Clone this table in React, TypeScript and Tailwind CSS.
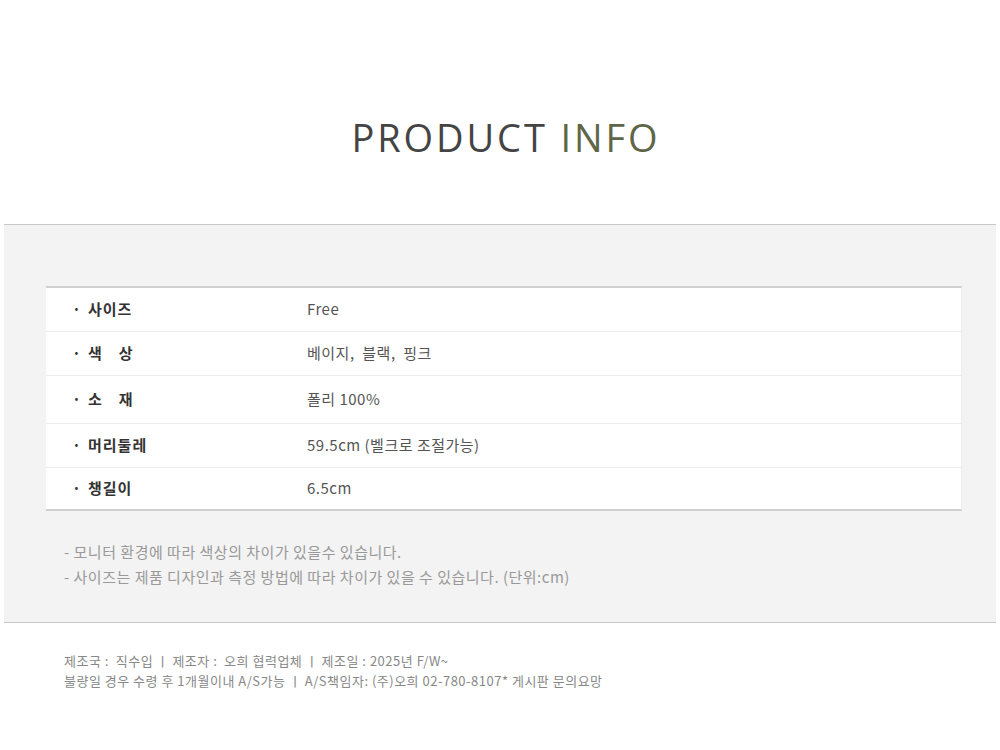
const rows = [
  { label: "사이즈", value: "Free", h: "h-[44px]" },
  { label: "색　상", value: "베이지,  블랙,  핑크", h: "h-[44px]" },
  { label: "소　재", value: "폴리 100%", h: "h-[48px]" },
  { label: "머리둘레", value: "59.5cm (벨크로 조절가능)", h: "h-[44px]" },
  { label: "챙길이", value: "6.5cm", h: "h-[41px]" },
];

const kr = "font-['Noto_Sans_CJK_KR','Noto_Sans',sans-serif]";

export default function App() {
  return (
    <div className={`w-[1000px] h-[750px] bg-white ${kr}`}>
      <div className="h-[224px] flex items-start justify-center pt-[111px]">
        <h1 className="ml-[12px] text-[38px] leading-[52px] tracking-[2.9px] font-['Open_Sans',sans-serif] font-medium text-[#444]">
          PRODUCT <span className="text-[#5f6647]">INFO</span>
        </h1>
      </div>

      <div className="mx-[4px] bg-[#f3f3f3] border-t border-b border-[#c8c8c8] pt-[61px] h-[399px]">
        <div className="ml-[42px] w-[916px] bg-white border-t-2 border-b-2 border-[#cfcfcf] border-r border-r-[#ececec]">
          {rows.map((r, i) => (
            <div
              key={r.label}
              className={`flex items-center ${r.h} ${i < rows.length - 1 ? "border-b border-[#ebebeb]" : ""}`}
            >
              <div className="w-[261px] flex items-center pl-[26px] text-[15px] text-[#333]">
                <span className="w-[16px] font-bold">·</span>
                <span className="font-bold tracking-[1px] whitespace-pre">{r.label}</span>
              </div>
              <div className="text-[15px] tracking-[0.5px] text-[#555] whitespace-pre">{r.value}</div>
            </div>
          ))}
        </div>
        <div className="mt-[28px] ml-[60px] text-[15px] tracking-[0.5px] leading-[25px] text-[#999]">
          <p>- 모니터 환경에 따라 색상의 차이가 있을수 있습니다.</p>
          <p>- 사이즈는 제품 디자인과 측정 방법에 따라 차이가 있을 수 있습니다.  (단위:cm)</p>
        </div>
      </div>

      <div className="pl-[64px] pt-[28px] text-[13px] tracking-[0.5px] leading-[20px] text-[#888] whitespace-pre">
        <p>제조국 :  직수입 ㅣ 제조자 :  오희 협력업체 ㅣ 제조일 : 2025년 F/W~</p>
        <p>불량일 경우 수령 후 1개월이내 A/S가능 ㅣ A/S책임자: (주)오희 02-780-8107* 게시판 문의요망</p>
      </div>
    </div>
  );
}
